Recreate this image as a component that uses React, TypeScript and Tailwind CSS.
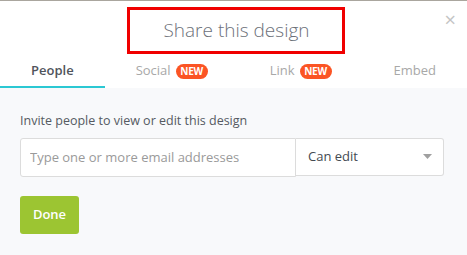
import React, { useState } from 'react'

const font = { fontFamily: '"Open Sans", "Noto Sans", sans-serif' }

const NewBadge = () => (
  <span className="ml-[5px] inline-flex h-[15px] w-[32px] items-center justify-center rounded-full bg-[#fb5424] text-[10px] font-bold leading-none tracking-[-0.3px] text-white">
    NEW
  </span>
)

const tabs = [
  { label: 'People', badge: false },
  { label: 'Social', badge: true },
  { label: 'Link', badge: true },
  { label: 'Embed', badge: false },
]

const App = () => {
  const [active, setActive] = useState('People')
  const [email, setEmail] = useState('')

  return (
    <div className="flex h-[255px] w-[467px] flex-col overflow-hidden bg-white" style={font}>
      <div className="h-px w-full bg-[#aaa69e]" />
      <div className="relative flex h-[57px] items-start justify-center pt-[6px]">
        <div className="ml-[5px] flex h-[47px] w-[218px] items-center justify-center border-[3px] border-[#f00000] pl-px">
          <span className="text-[19px] font-light text-[#6c7079]">Share this design</span>
        </div>
        <button className="absolute right-[11px] top-[9px] text-[20px] leading-none text-[#c4c4c4]">×</button>
      </div>

      <div className="flex h-[30px] items-stretch justify-between">
        {tabs.map((t) => (
          <button
            key={t.label}
            onClick={() => setActive(t.label)}
            className={`flex h-[30px] items-center px-[31px] pb-[2px] text-[13px] ${
              active === t.label
                ? 'border-b-2 border-[#2bc8d3] font-semibold text-[#4f545c]'
                : 'border-b-2 border-transparent text-[#a8a8a8]'
            }`}
          >
            {t.label}
            {t.badge && <NewBadge />}
          </button>
        ))}
      </div>

      <div className="flex flex-1 flex-col bg-[#f8f9fb] px-[20px] pt-[24px]">
        <p className="text-[12.5px] text-[#555a62]">Invite people to view or edit this design</p>
        <div className="mt-[7px] flex h-[39px] w-[424px]">
          <input
            value={email}
            onChange={(e) => setEmail(e.target.value)}
            placeholder="Type one or more email addresses"
            className="h-[39px] w-[276px] rounded-l-[3px] border border-[#dcdcdc] bg-white px-[9px] text-[13px] text-[#444] outline-none placeholder:text-[#9a9a9a]"
          />
          <div className="flex h-[38px] flex-1 items-center justify-between rounded-r-[3px] border border-l-0 border-[#dcdcdc] bg-white pl-[12px] pr-[11px] text-[13px] text-[#444a52]">
            <span>Can edit</span>
            <svg width="9" height="5" viewBox="0 0 9 5">
              <path d="M0 0h9L4.5 5z" fill="#a0a0a0" />
            </svg>
          </div>
        </div>
        <button className="mt-[19px] flex h-[38px] w-[59px] items-center justify-center rounded-[3px] bg-[#9cc532] text-[13px] font-semibold text-white">
          Done
        </button>
      </div>
    </div>
  )
}

export default App
